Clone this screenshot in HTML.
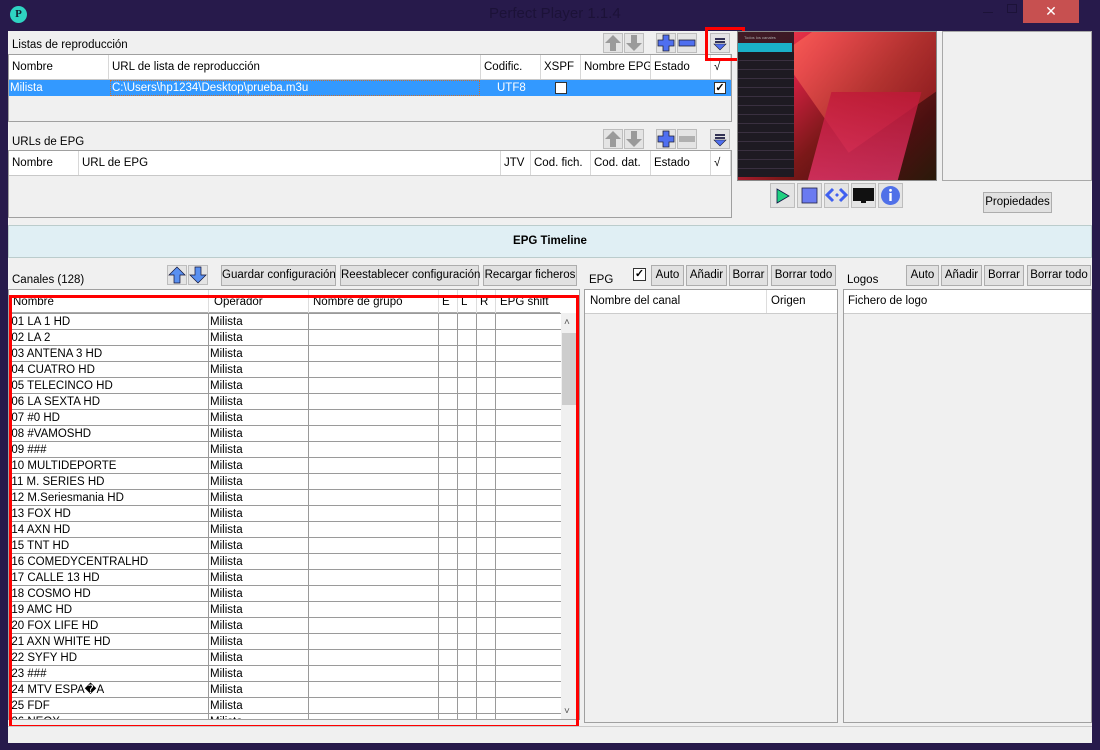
<!DOCTYPE html>
<html><head><meta charset="utf-8"><style>
*{box-sizing:border-box;margin:0;padding:0}
body{width:1100px;height:750px;background:#271a4b;font-family:"Liberation Sans",sans-serif;font-size:11.5px;color:#000;position:relative;overflow:hidden}
.a{position:absolute}
.panel{background:#f0f0f0}
.box{position:absolute;background:#f0f0f0;border:1px solid #a0a0a0}
.hdr{position:absolute;background:#fff;border-bottom:1px solid #c8c8c8;height:25px}
.c{position:absolute;top:0;height:100%;border-right:1px solid #d8d8d8;padding-left:3px;line-height:25px;white-space:nowrap;overflow:hidden}
.btn{position:absolute;background:#e1e1e1;border:1px solid #adadad;text-align:center;line-height:19px;font-size:11.5px;white-space:nowrap}
.ib{position:absolute;width:20px;height:20px;background:#e4e4e4;border:1px solid #bdbdbd}
table{border-collapse:collapse;position:absolute}
td{border:1px solid #9a9a9a;height:16px;padding:0 0 0 1px;line-height:14px;white-space:nowrap;overflow:hidden;font-size:11.5px}
</style></head><body>
<div class="a" style="left:10px;top:6px;width:17px;height:17px;border-radius:50%;background:#2fd3c2;color:#123;font:bold 11px 'Liberation Serif',serif;text-align:center;line-height:17px">P</div>
<div class="a" style="left:489px;top:5px;font-size:15px;color:#1c1238">Perfect Player 1.1.4</div>
<div class="a" style="left:983px;top:12px;width:10px;height:1px;background:#1c1238"></div>
<div class="a" style="left:1007px;top:4px;width:10px;height:9px;border:1px solid #1c1238"></div>
<div class="a" style="left:1023px;top:0;width:56px;height:23px;background:#c75050;color:#fff;text-align:center;line-height:22px;font-size:14px">✕</div>
<div class="a panel" style="left:8px;top:31px;width:1084px;height:712px"></div>

<div class="a" style="left:12px;top:39px">Listas de reproducción</div>
<div class="box" style="left:8px;top:54px;width:724px;height:68px;background:#f0f0f0"></div>
<div class="hdr" style="left:9px;top:55px;width:722px">
<div class="c" style="left:0;width:100px">Nombre</div><div class="c" style="left:100px;width:372px">URL de lista de reproducción</div><div class="c" style="left:472px;width:60px">Codific.</div><div class="c" style="left:532px;width:40px">XSPF</div><div class="c" style="left:572px;width:70px">Nombre EPG</div><div class="c" style="left:642px;width:60px">Estado</div><div class="c" style="left:702px;width:20px">√</div></div>
<div class="a" style="left:9px;top:80px;width:722px;height:16px;background:#3399ff;color:#fff;line-height:16px">
<span class="a" style="left:1px">Milista</span><span class="a" style="left:101px;width:370px;height:16px;border:1px dotted #c87030;padding-left:1px;line-height:14px">C:\Users\hp1234\Desktop\prueba.m3u</span><span class="a" style="left:488px">UTF8</span>
<span class="a" style="left:546px;top:2px;width:12px;height:12px;background:#fff;border:1px solid #333"></span>
<span class="a" style="left:705px;top:2px;width:12px;height:12px;background:#fff;border:1px solid #333;color:#000;font-size:11px;line-height:10px;text-align:center;font-weight:bold">✓</span></div>
<div class="ib" style="left:603px;top:33px"><svg width="18" height="18"><path d="M9 1L17 9H12V17H6V9H1Z" fill="#9a9a9a"/></svg></div>
<div class="ib" style="left:624px;top:33px"><svg width="18" height="18"><path d="M9 17L17 9H12V1H6V9H1Z" fill="#9a9a9a"/></svg></div>
<div class="ib" style="left:656px;top:33px"><svg width="18" height="18"><path d="M6 1H12V6H17V12H12V17H6V12H1V6H6Z" fill="#4f6ff0" stroke="#223" stroke-width=".8"/></svg></div>
<div class="ib" style="left:677px;top:33px"><svg width="18" height="18"><rect x="1" y="6" width="16" height="6" fill="#4f6ff0" stroke="#223" stroke-width=".8"/></svg></div>
<div class="ib" style="left:710px;top:33px"><svg width="18" height="18"><rect x="4" y="4" width="10" height="2" fill="#335"/><rect x="4" y="7" width="10" height="2" fill="#335"/><path d="M3 10H15L9 16Z" fill="#4f6ff0" stroke="#223" stroke-width=".6"/></svg></div>
<div class="a" style="left:705px;top:27px;width:40px;height:34px;border:3px solid #f00"></div>

<div class="a" style="left:12px;top:136px">URLs de EPG</div>
<div class="box" style="left:8px;top:150px;width:724px;height:68px"></div>
<div class="hdr" style="left:9px;top:151px;width:722px">
<div class="c" style="left:0;width:70px">Nombre</div><div class="c" style="left:70px;width:422px">URL de EPG</div><div class="c" style="left:492px;width:30px">JTV</div><div class="c" style="left:522px;width:60px">Cod. fich.</div><div class="c" style="left:582px;width:60px">Cod. dat.</div><div class="c" style="left:642px;width:60px">Estado</div><div class="c" style="left:702px;width:20px">√</div></div>
<div class="ib" style="left:603px;top:129px"><svg width="18" height="18"><path d="M9 1L17 9H12V17H6V9H1Z" fill="#9a9a9a"/></svg></div>
<div class="ib" style="left:624px;top:129px"><svg width="18" height="18"><path d="M9 17L17 9H12V1H6V9H1Z" fill="#9a9a9a"/></svg></div>
<div class="ib" style="left:656px;top:129px"><svg width="18" height="18"><path d="M6 1H12V6H17V12H12V17H6V12H1V6H6Z" fill="#4f6ff0" stroke="#223" stroke-width=".8"/></svg></div>
<div class="ib" style="left:677px;top:129px"><svg width="18" height="18"><rect x="1" y="6" width="16" height="6" fill="#b0b0b0"/></svg></div>
<div class="ib" style="left:710px;top:129px"><svg width="18" height="18"><rect x="4" y="4" width="10" height="2" fill="#335"/><rect x="4" y="7" width="10" height="2" fill="#335"/><path d="M3 10H15L9 16Z" fill="#4f6ff0" stroke="#223" stroke-width=".6"/></svg></div>

<div class="a" style="left:737px;top:31px;width:200px;height:150px;border:1px solid #888;overflow:hidden;background:linear-gradient(135deg,#ff4a50 0%,#d02040 30%,#7a1818 55%,#4a1010 80%,#2a1a0a 100%)">
<div class="a" style="left:60px;top:-40px;width:180px;height:120px;background:linear-gradient(160deg,#ff6a5a,#a01a20);transform:rotate(-35deg);opacity:.7"></div>
<div class="a" style="left:80px;top:60px;width:90px;height:100px;background:linear-gradient(180deg,#c01838,#e83870);transform:skewX(-15deg);opacity:.8"></div>
<div class="a" style="left:0;top:0;width:56px;height:140px;background:rgba(30,20,30,.85)">
<div style="font-size:4px;color:#aaa;padding:3px 6px">Todos los canales</div>
<div style="height:9px;background:#1ab0c8;margin-right:2px"></div>
<div style="height:125px;background:repeating-linear-gradient(#1e1a22 0 8px,#3a3040 8px 9px)"></div></div></div>
<div class="a" style="left:942px;top:31px;width:150px;height:150px;border:1px solid #a8a8a8;background:#f0f0f0"></div>
<div class="ib" style="left:770px;top:183px;width:25px;height:25px"><svg width="23" height="23"><path d="M6 5L18 12L6 19Z" fill="#20d080" stroke="#114" stroke-width=".8"/></svg></div>
<div class="ib" style="left:797px;top:183px;width:25px;height:25px"><svg width="23" height="23"><rect x="4" y="4" width="15" height="15" fill="#6a7af0" stroke="#224" stroke-width=".8"/></svg></div>
<div class="ib" style="left:824px;top:183px;width:25px;height:25px"><svg width="23" height="23"><path d="M8 5L2 11L8 17M15 5L21 11L15 17" stroke="#4060f0" stroke-width="3" fill="none"/><path d="M10 11L12 9L14 11L12 13Z" fill="#4060f0"/></svg></div>
<div class="ib" style="left:851px;top:183px;width:25px;height:25px"><svg width="23" height="23"><rect x="1" y="4" width="21" height="13" fill="#111"/><rect x="9" y="17" width="5" height="2" fill="#111"/></svg></div>
<div class="ib" style="left:878px;top:183px;width:25px;height:25px"><svg width="23" height="23"><circle cx="11.5" cy="11.5" r="9.5" fill="#5070e8"/><rect x="10.3" y="9" width="2.4" height="8" fill="#fff"/><circle cx="11.5" cy="6.3" r="1.4" fill="#fff"/></svg></div>
<div class="btn" style="left:983px;top:192px;width:69px;height:21px">Propiedades</div>

<div class="a" style="left:8px;top:225px;width:1084px;height:33px;background:#e0eff4;border:1px solid #bcc;font-weight:bold;text-align:center;line-height:31px">EPG Timeline</div>

<div class="a" style="left:12px;top:274px">Canales (128)</div>
<div class="ib" style="left:167px;top:265px"><svg width="18" height="18"><path d="M9 1L17 9H12V17H6V9H1Z" fill="#5a90f0" stroke="#113" stroke-width=".7"/></svg></div>
<div class="ib" style="left:188px;top:265px"><svg width="18" height="18"><path d="M9 17L17 9H12V1H6V9H1Z" fill="#5a90f0" stroke="#113" stroke-width=".7"/></svg></div>
<div class="btn" style="left:221px;top:265px;width:115px;height:21px">Guardar configuración</div>
<div class="btn" style="left:340px;top:265px;width:139px;height:21px">Reestablecer configuración</div>
<div class="btn" style="left:483px;top:265px;width:94px;height:21px">Recargar ficheros</div>
<div class="a" style="left:8px;top:289px;width:572px;height:431px;background:#fff;border:1px solid #a0a0a0;overflow:hidden">
<div class="a" style="left:0;top:0;width:551px;height:23px;border-bottom:1px solid #aaa;background:#fff;line-height:24px">
<span class="a" style="left:4px">Nombre</span><span class="a" style="left:205px">Operador</span><span class="a" style="left:304px">Nombre de grupo</span><span class="a" style="left:433px">E</span><span class="a" style="left:452px">L</span><span class="a" style="left:471px">R</span><span class="a" style="left:491px">EPG shift</span>
<span class="a" style="left:199px;top:0;height:23px;border-left:1px solid #ddd"></span><span class="a" style="left:299px;top:0;height:23px;border-left:1px solid #ddd"></span><span class="a" style="left:429px;top:0;height:23px;border-left:1px solid #ddd"></span><span class="a" style="left:448px;top:0;height:23px;border-left:1px solid #ddd"></span><span class="a" style="left:467px;top:0;height:23px;border-left:1px solid #ddd"></span><span class="a" style="left:486px;top:0;height:23px;border-left:1px solid #ddd"></span></div>
<table style="left:-6px;top:23px;width:558px;table-layout:fixed">
<colgroup><col style="width:205px"><col style="width:100px"><col style="width:130px"><col style="width:19px"><col style="width:19px"><col style="width:19px"><col style="width:66px"></colgroup>
<tr><td>001 LA 1 HD</td><td>Milista</td><td></td><td></td><td></td><td></td><td></td></tr>
<tr><td>002 LA 2</td><td>Milista</td><td></td><td></td><td></td><td></td><td></td></tr>
<tr><td>003 ANTENA 3 HD</td><td>Milista</td><td></td><td></td><td></td><td></td><td></td></tr>
<tr><td>004 CUATRO HD</td><td>Milista</td><td></td><td></td><td></td><td></td><td></td></tr>
<tr><td>005 TELECINCO HD</td><td>Milista</td><td></td><td></td><td></td><td></td><td></td></tr>
<tr><td>006 LA SEXTA HD</td><td>Milista</td><td></td><td></td><td></td><td></td><td></td></tr>
<tr><td>007 #0 HD</td><td>Milista</td><td></td><td></td><td></td><td></td><td></td></tr>
<tr><td>008 #VAMOSHD</td><td>Milista</td><td></td><td></td><td></td><td></td><td></td></tr>
<tr><td>009 ###</td><td>Milista</td><td></td><td></td><td></td><td></td><td></td></tr>
<tr><td>010 MULTIDEPORTE</td><td>Milista</td><td></td><td></td><td></td><td></td><td></td></tr>
<tr><td>011 M. SERIES HD</td><td>Milista</td><td></td><td></td><td></td><td></td><td></td></tr>
<tr><td>012 M.Seriesmania HD</td><td>Milista</td><td></td><td></td><td></td><td></td><td></td></tr>
<tr><td>013 FOX HD</td><td>Milista</td><td></td><td></td><td></td><td></td><td></td></tr>
<tr><td>014 AXN HD</td><td>Milista</td><td></td><td></td><td></td><td></td><td></td></tr>
<tr><td>015 TNT HD</td><td>Milista</td><td></td><td></td><td></td><td></td><td></td></tr>
<tr><td>016 COMEDYCENTRALHD</td><td>Milista</td><td></td><td></td><td></td><td></td><td></td></tr>
<tr><td>017 CALLE 13 HD</td><td>Milista</td><td></td><td></td><td></td><td></td><td></td></tr>
<tr><td>018 COSMO HD</td><td>Milista</td><td></td><td></td><td></td><td></td><td></td></tr>
<tr><td>019 AMC HD</td><td>Milista</td><td></td><td></td><td></td><td></td><td></td></tr>
<tr><td>020 FOX LIFE HD</td><td>Milista</td><td></td><td></td><td></td><td></td><td></td></tr>
<tr><td>021 AXN WHITE HD</td><td>Milista</td><td></td><td></td><td></td><td></td><td></td></tr>
<tr><td>022 SYFY HD</td><td>Milista</td><td></td><td></td><td></td><td></td><td></td></tr>
<tr><td>023 ###</td><td>Milista</td><td></td><td></td><td></td><td></td><td></td></tr>
<tr><td>024 MTV ESPA�A</td><td>Milista</td><td></td><td></td><td></td><td></td><td></td></tr>
<tr><td>025 FDF</td><td>Milista</td><td></td><td></td><td></td><td></td><td></td></tr>
<tr><td>026 NEOX</td><td>Milista</td><td></td><td></td><td></td><td></td><td></td></tr>
</table>
<div class="a" style="left:552px;top:23px;width:18px;height:407px;background:#f0f0f0">
<div class="a" style="left:3px;top:4px;font-size:10px;color:#555">˄</div>
<div class="a" style="left:1px;top:20px;width:15px;height:72px;background:#cdcdcd"></div>
<div class="a" style="left:3px;top:393px;font-size:10px;color:#555">˅</div></div>
</div>
<div class="a" style="left:9px;top:295px;width:570px;height:433px;border:3px solid #f00"></div>

<div class="a" style="left:589px;top:274px">EPG</div>
<div class="a" style="left:633px;top:268px;width:13px;height:13px;border:1px solid #333;background:#fff;font-size:11px;line-height:11px;text-align:center;font-weight:bold">✓</div>
<div class="btn" style="left:651px;top:265px;width:33px;height:21px">Auto</div>
<div class="btn" style="left:686px;top:265px;width:41px;height:21px">Añadir</div>
<div class="btn" style="left:729px;top:265px;width:39px;height:21px">Borrar</div>
<div class="btn" style="left:771px;top:265px;width:65px;height:21px">Borrar todo</div>
<div class="a" style="left:584px;top:289px;width:254px;height:434px;border:1px solid #a0a0a0;background:#f0f0f0">
<div class="a" style="left:0;top:0;width:252px;height:24px;background:#fff;border-bottom:1px solid #ccc;line-height:23px"><span class="a" style="left:5px">Nombre del canal</span><span class="a" style="left:181px;height:23px;border-left:1px solid #ddd;padding-left:4px">Origen</span></div></div>
<div class="a" style="left:847px;top:274px">Logos</div>
<div class="btn" style="left:906px;top:265px;width:33px;height:21px">Auto</div>
<div class="btn" style="left:941px;top:265px;width:41px;height:21px">Añadir</div>
<div class="btn" style="left:984px;top:265px;width:40px;height:21px">Borrar</div>
<div class="btn" style="left:1027px;top:265px;width:64px;height:21px">Borrar todo</div>
<div class="a" style="left:843px;top:289px;width:249px;height:434px;border:1px solid #a0a0a0;background:#f0f0f0">
<div class="a" style="left:0;top:0;width:247px;height:24px;background:#fff;border-bottom:1px solid #ccc;line-height:23px"><span class="a" style="left:4px">Fichero de logo</span></div></div>

<div class="a" style="left:8px;top:726px;width:1084px;height:17px;border-top:1px solid #c8c8c8;background:#f0f0f0"></div>
</body></html>
